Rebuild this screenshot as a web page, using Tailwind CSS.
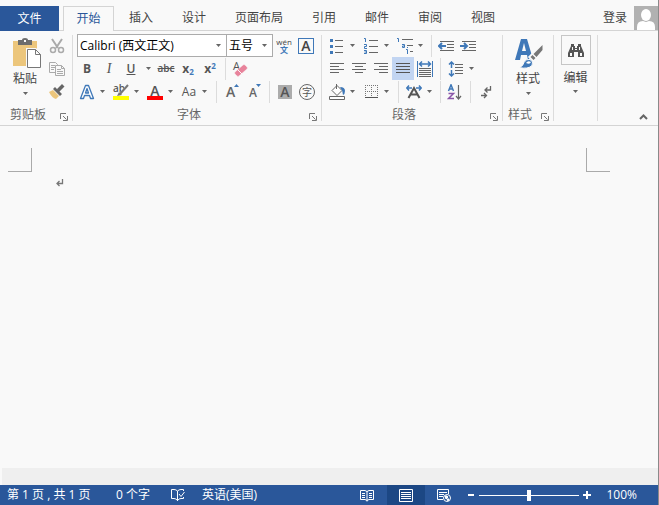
<!DOCTYPE html>
<html lang="zh-CN">

<head>
    <meta charset="UTF-8">
    <meta name="viewport" content="width=device-width, initial-scale=1.0">
    <title>文档</title>
    <script src="https://cdn.jsdelivr.net/npm/@tailwindcss/browser@4"></script>
</head>

<body class="h-screen flex flex-col overflow-hidden bg-[#f9f9f9] border-r border-[#8a8a8a] text-xs text-[#444] font-['Open_Sans','Noto_Sans_CJK_SC',sans-serif]">
    <svg class="hidden">
        <symbol id="down" viewBox="0 0 5 3"><path d="M0 0h5L2.500 3z" fill="#666" /></symbol>
        <symbol id="launch" viewBox="0 0 8 8"><path d="M.5 6V.5H6M3 3l3.500 3.500M7.500 3v4.500H3" fill="none" stroke="#777" /></symbol>
    </svg>

    <!-- Tabs -->
    <nav class="flex items-end h-[31px] shrink-0 whitespace-nowrap border-b border-[#d4d4d4]">
        <button class="w-[59px] h-[25px] -mb-px bg-[#2a579a] text-white">文件</button>
        <button class="ml-1 mr-px w-[51px] h-[25px] -mb-px bg-[#f9f9f9] border border-b-0 border-[#d4d4d4] text-[#2a579a]">开始</button>
        <div class="flex gap-px h-6">
            <button class="px-3.5">插入</button>
            <button class="px-3.5">设计</button>
            <button class="px-3.5">页面布局</button>
            <button class="px-3.5">引用</button>
            <button class="px-3.5">邮件</button>
            <button class="px-3.5">审阅</button>
            <button class="px-3.5">视图</button>
        </div>
        <a href="#" class="ml-auto mr-[7px] h-6 leading-6">登录</a>
        <svg class="w-6 h-6" viewBox="0 0 24 24"><path fill="#b1b1b1" d="M0 0h24v24H0z" /><ellipse cx="12" cy="9" rx="5" ry="6" fill="#fff" /><path fill="#fff" d="M3 24v-3q0-6 6-6l3 1 3-1q6 0 6 6v3z" /></svg>
    </nav>

    <!-- Ribbon -->
    <div class="flex shrink-0 h-[95px] border-b border-[#d4d4d4]">
        <!-- Clipboard -->
        <section class="w-[72px] pt-[3px] flex flex-col">
            <div class="flex h-[69px]">
                <button class="w-11 ml-[3px] mr-0.5 pt-1 flex flex-col items-center">
                    <svg class="w-7 h-[31px] ml-1" viewBox="0 0 28 31">
                        <path fill="#ecc67c" d="M0 3h24v25H0z" />
                        <path fill="#6d6d6d" d="M5 2h4q0-2 3-2t3 2h4v5H5z" />
                        <path fill="#f9f9f9" d="M11 2h2v2h-2z" />
                        <path fill="#fff" stroke="#f9f9f9" stroke-width="3" d="M14.500 11.500h8l5 5v13h-13z" />
                        <path fill="#fff" stroke="#777" d="M14.500 11.500h8l5 5v13h-13zM22.500 11.500v5h5" />
                    </svg>
                    <span class="leading-4 mt-0.5">粘贴</span>
                    <svg class="w-[5px] h-[3px] mt-[5px]"><use href="#down" /></svg>
                </button>
                <div class="flex flex-col">
                    <button class="w-4 h-[23px] flex items-center justify-center" aria-label="剪切">
                        <svg class="w-4 h-4" viewBox="0 0 16 16" fill="none" stroke="#aaa"><path stroke-width="2" d="M3 1l6 9M13 1L7 10" /><circle cx="4" cy="12" r="2.500" stroke-width="1.500" /><circle cx="12" cy="12" r="2.500" stroke-width="1.500" /></svg>
                    </button>
                    <button class="w-4 h-[23px] flex items-center justify-center" aria-label="复制">
                        <svg class="w-4 h-4" viewBox="0 0 16 16" fill="#f9f9f9" stroke="#aaa"><path d="M.5 1.500h6l2 2v8h-8zM2 4.500h4M2 6.500h4M2 8.500h3" /><path d="M6.500 4.500h6l3 3v7h-9zM12.500 4.500v3h3M8 8.500h4M8 10.500h6M8 12.500h6" /></svg>
                    </button>
                    <button class="w-4 h-[23px] flex items-center justify-center" aria-label="格式刷">
                        <svg class="w-4 h-4" viewBox="0 0 16 16"><path fill="#ecc67c" d="M0 8l4-2 6 6-3 3q-4-1-7-7z" /><path fill="#666" d="M4 5l2-2 7 7-2 2zM8 5l5-5 2.500 2.500-5 5z" /></svg>
                    </button>
                </div>
            </div>
            <div class="h-[18px] mt-[3px] flex items-center pl-2.5 pr-1 text-[#666]">
                <span class="flex-1">剪贴板</span>
                <button class="mt-1" aria-label="剪贴板选项"><svg class="w-2 h-2"><use href="#launch" /></svg></button>
            </div>
        </section>
        <div class="w-px my-1 bg-[#dcdcdc]"></div>

        <!-- Font -->
        <section class="w-[248px] pt-[3px] flex flex-col">
            <div class="flex h-[23px] pl-1">
                <div class="relative">
                    <select aria-label="字体" class="appearance-none w-[150px] h-[23px] pl-0.5 border border-[#ababab] bg-white text-black text-xs">
                        <option>Calibri (西文正文)</option>
                    </select>
                    <svg class="absolute right-1.5 top-2.5 w-[5px] h-[3px] pointer-events-none"><use href="#down" /></svg>
                </div>
                <div class="relative -ml-px">
                    <select aria-label="字号" class="appearance-none w-[47px] h-[23px] pl-0.5 border border-[#ababab] bg-white text-black text-xs">
                        <option>五号</option>
                    </select>
                    <svg class="absolute right-1.5 top-2.5 w-[5px] h-[3px] pointer-events-none"><use href="#down" /></svg>
                </div>
                <button class="w-[22px] flex flex-col items-center justify-center" aria-label="拼音指南">
                    <span class="h-2 text-[8px] leading-[8px]">wén</span>
                    <span class="h-2 text-[8px] leading-[8px] font-bold text-[#3f78b8]">文</span>
                </button>
                <button class="w-[22px] flex items-center justify-center" aria-label="字符边框">
                    <span class="w-4 h-4 border border-[#3f78b8] text-sm leading-[14px] font-semibold">A</span>
                </button>
            </div>
            <div class="flex h-[23px] pl-[3px] items-center text-[#555]">
                <button class="w-[22px] font-bold">B</button>
                <button class="w-[22px] italic font-['Liberation_Serif'] text-sm">I</button>
                <button class="w-[22px] underline font-semibold">U</button>
                <button class="w-3 pl-1 mr-px" aria-label="下划线样式"><svg class="w-[5px] h-[3px]"><use href="#down" /></svg></button>
                <button class="w-[22px] line-through text-[10px] font-semibold">abc</button>
                <button class="w-[22px] font-bold flex justify-center items-end">x<span class="text-[8px] leading-[10px] text-[#3f78b8]">2</span></button>
                <button class="w-[22px] font-bold flex justify-center items-start">x<span class="text-[8px] leading-[10px] text-[#3f78b8]">2</span></button>
                <div class="w-px h-[22px] mx-1 bg-[#dcdcdc]"></div>
                <button class="w-[22px] flex justify-center" aria-label="清除所有格式">
                    <svg class="w-4 h-4 overflow-visible" viewBox="0 0 16 16"><text x="0" y="9" font-size="11" fill="#555">A</text><path fill="#e8839b" stroke="#f9f9f9" stroke-width=".5" d="M2 11l8-7q1-1 2 0l2 2q1 1 0 2l-8 7q-1 1-2 0l-2-2q-1-1 0-2z" /><path stroke="#f9f9f9" d="M4.500 8.500l4.500 4.500" /></svg>
                </button>
            </div>
            <div class="flex h-[23px] pl-[3px] items-center text-[#555]">
                <button class="w-[22px] flex justify-center" aria-label="文本效果"><svg class="w-4 h-4" viewBox="0 0 16 16"><path d="M1.500 14.500L6.500 1.500h3l5 13h-3l-1-3h-5l-1 3zM6.500 9h3L8 4.500z" fill="#fff" stroke="#3f78b8" stroke-width="1.300" stroke-linejoin="round" /></svg></button>
                <button class="w-3 pl-0.5" aria-label="文本效果选项"><svg class="w-[5px] h-[3px]"><use href="#down" /></svg></button>
                <button class="w-[22px] flex justify-center" aria-label="突出显示"><svg class="w-4 h-4 overflow-visible" viewBox="0 0 16 16"><text x="0" y="8" font-size="10" font-weight="600" fill="#555">ab</text><path stroke="#f9f9f9" stroke-width="3" d="M7 11l8-9" /><path stroke="#777" stroke-width="2" d="M7 10l8-9" /><path fill="#777" d="M4 12l2-4 3 3z" /><path fill="#ff0" d="M0 12h16v4H0z" /></svg></button>
                <button class="w-3 pl-0.5" aria-label="突出显示颜色"><svg class="w-[5px] h-[3px]"><use href="#down" /></svg></button>
                <button class="w-[22px] flex justify-center" aria-label="字体颜色"><svg class="w-4 h-4 overflow-visible" viewBox="0 0 16 16"><text x="8" y="12" text-anchor="middle" font-size="14" font-weight="600" fill="#555">A</text><path fill="red" d="M0 12h16v4H0z" /></svg></button>
                <button class="w-3 pl-0.5" aria-label="更多字体颜色"><svg class="w-[5px] h-[3px]"><use href="#down" /></svg></button>
                <button class="w-[22px]">Aa</button>
                <button class="w-3 pl-0.5" aria-label="更改大小写"><svg class="w-[5px] h-[3px]"><use href="#down" /></svg></button>
                <div class="w-px h-[22px] mx-1 bg-[#dcdcdc]"></div>
                <button class="w-[22px] flex justify-center" aria-label="增大字号"><svg class="w-4 h-4 overflow-visible" viewBox="0 0 16 16"><text x="2" y="13" font-size="14" font-weight="600" fill="#666">A</text><path fill="#3f78b8" d="M10 3l2.500-3L15 3z" /></svg></button>
                <button class="w-[22px] flex justify-center" aria-label="减小字号"><svg class="w-4 h-4 overflow-visible" viewBox="0 0 16 16"><text x="3" y="13" font-size="12" font-weight="600" fill="#666">A</text><path fill="#3f78b8" d="M10 0h5l-2.500 3z" /></svg></button>
                <div class="w-px h-[22px] mx-1 bg-[#dcdcdc]"></div>
                <button class="w-[22px] flex justify-center" aria-label="字符底纹"><span class="w-3.5 h-3.5 bg-[#acacac] text-sm leading-[14px] font-semibold">A</span></button>
                <button class="w-[22px] flex justify-center" aria-label="带圈字符"><span class="w-4 h-4 border border-[#666] rounded-full text-[10px] leading-[14px]">字</span></button>
            </div>
            <div class="h-[18px] mt-[3px] flex items-center pr-1 text-[#666]">
                <span class="flex-1 text-center pr-1">字体</span>
                <button class="mt-1" aria-label="字体选项"><svg class="w-2 h-2"><use href="#launch" /></svg></button>
            </div>
        </section>
        <div class="w-px my-1 bg-[#dcdcdc]"></div>

        <!-- Paragraph -->
        <section class="w-[180px] pt-[3px] flex flex-col">
            <div class="flex h-[23px] pl-1 items-center">
                <button class="w-[22px] flex justify-center" aria-label="项目符号"><svg class="w-4 h-4" viewBox="0 0 16 16"><path stroke="#666" d="M6 2.500h8M6 8.500h8M6 14.500h8" /><path fill="#3f78b8" d="M1 1h3v3H1zM1 7h3v3H1zM1 13h3v3H1z" /></svg></button>
                <button class="w-3 pl-0.5" aria-label="项目符号库"><svg class="w-[5px] h-[3px]"><use href="#down" /></svg></button>
                <button class="w-[22px] flex justify-center" aria-label="编号"><svg class="w-4 h-4" viewBox="0 0 16 16" fill="none"><path stroke="#666" d="M6 2.500h9M6 8.500h9M6 14.500h9" /><path stroke="#3f78b8" d="M1 .5h1.500V4M1 6.500h2.500v2h-2v2H4M1 12.500h2.500v3H1M1.500 14h2" /></svg></button>
                <button class="w-3 pl-0.5" aria-label="编号库"><svg class="w-[5px] h-[3px]"><use href="#down" /></svg></button>
                <button class="w-[22px] flex justify-center" aria-label="多级列表"><svg class="w-4 h-4" viewBox="0 0 16 16" fill="none"><path stroke="#666" d="M5 1.500h11M10 7.500h6M13 13.500h3" /><path stroke="#3f78b8" d="M0 .5h1.500V4M5 6.500h2.500v3h-2v-1.500h2M9 11.500h1.500V16M10 9.500h1" /></svg></button>
                <button class="w-3 pl-0.5" aria-label="多级列表库"><svg class="w-[5px] h-[3px]"><use href="#down" /></svg></button>
                <div class="w-px h-[22px] mx-[3px] bg-[#dcdcdc]"></div>
                <button class="w-[22px] flex justify-center" aria-label="减少缩进量"><svg class="w-4 h-3" viewBox="0 0 16 12" fill="none"><path stroke="#666" d="M2 1.500h14M9 4.500h7M9 7.500h7M2 10.500h14" /><path stroke="#3f78b8" stroke-width="2" d="M8 6H1M4 3L1 6l3 3" /></svg></button>
                <button class="w-[22px] flex justify-center" aria-label="增加缩进量"><svg class="w-4 h-3" viewBox="0 0 16 12" fill="none"><path stroke="#666" d="M2 1.500h14M9 4.500h7M9 7.500h7M2 10.500h14" /><path stroke="#3f78b8" stroke-width="2" d="M0 6h7M4 3l3 3-3 3" /></svg></button>
            </div>
            <div class="flex h-[23px] pl-1 items-center">
                <button class="w-[22px] flex justify-center" aria-label="左对齐"><svg class="w-3.5 h-[11px]" viewBox="0 0 14 11" stroke="#666"><path d="M0 .5h14M0 3.500h9M0 6.500h14M0 9.500h9" /></svg></button>
                <button class="w-[22px] flex justify-center" aria-label="居中"><svg class="w-3.5 h-[11px]" viewBox="0 0 14 11" stroke="#666"><path d="M0 .5h14M3 3.500h8M0 6.500h14M3 9.500h8" /></svg></button>
                <button class="w-[22px] flex justify-center" aria-label="右对齐"><svg class="w-3.5 h-[11px]" viewBox="0 0 14 11" stroke="#666"><path d="M0 .5h14M5 3.500h9M0 6.500h14M5 9.500h9" /></svg></button>
                <button class="w-[22px] h-[23px] flex items-center justify-center bg-[#c2d5f2]" aria-label="两端对齐"><svg class="w-3.5 h-[11px]" viewBox="0 0 14 11" stroke="#555"><path d="M0 .5h14M0 3.500h14M0 6.500h14M0 9.500h14" /></svg></button>
                <button class="w-[22px] flex justify-center" aria-label="分散对齐"><svg class="w-4 h-4" viewBox="0 0 16 16" fill="none"><path stroke="#3f78b8" d="M.5 0v16M15.500 0v16" /><path stroke="#3f78b8" stroke-width="1.500" d="M3 3h10M5 .5L2.500 3 5 5.500M11 .5L13.500 3 11 5.500" /><path stroke="#666" d="M2 7.500h12M2 9.500h12M2 11.500h12M2 13.500h12M2 15.500h12" /></svg></button>
                <div class="w-px h-[22px] mx-1 bg-[#dcdcdc]"></div>
                <button class="w-[22px] flex justify-center" aria-label="行距"><svg class="w-4 h-4" viewBox="0 0 16 16" fill="none"><path stroke="#666" d="M7 3.500h8M7 6.500h8M7 9.500h8M7 12.500h8" /><path stroke="#3f78b8" stroke-width="1.500" d="M3.500 1v6M1 3.500L3.500 1 6 3.500M3.500 9v6M1 12.500L3.500 15 6 12.500" /></svg></button>
                <button class="w-3 pl-0.5" aria-label="行距选项"><svg class="w-[5px] h-[3px]"><use href="#down" /></svg></button>
            </div>
            <div class="flex h-[23px] pl-1 items-center">
                <button class="w-[22px] flex justify-center" aria-label="底纹"><svg class="w-4 h-4" viewBox="0 0 16 16" fill="none"><path stroke="#666" fill="#fff" d="M8 1.500l5 5-5 5-5-5zM7.500 0v5M.5 12.500h15v3H.5z" /><path fill="#3f78b8" d="M11 3q5 0 5 4 0 3-2 4 0-4-3-8z" /></svg></button>
                <button class="w-3 pl-0.5" aria-label="底纹颜色"><svg class="w-[5px] h-[3px]"><use href="#down" /></svg></button>
                <button class="w-[22px] flex justify-center" aria-label="边框"><svg class="w-[13px] h-[13px]" viewBox="0 0 13 13" stroke="#777"><path stroke-dasharray="1 1" d="M0 .5h13M0 6.500h13M.5 0v13M6.500 0v13M12.500 0v13" /><path d="M0 12.500h13" stroke="#555" /></svg></button>
                <button class="w-3 pl-0.5" aria-label="边框样式"><svg class="w-[5px] h-[3px]"><use href="#down" /></svg></button>
                <div class="w-px h-[22px] mx-1 bg-[#dcdcdc]"></div>
                <button class="w-[22px] flex justify-center" aria-label="中文版式"><svg class="w-4 h-4" viewBox="0 0 16 16" fill="none"><path stroke="#555" stroke-width="2" d="M2.500 14L8 4l5.500 10M5 10.500h6" /><path stroke="#3f78b8" stroke-width="1.500" d="M6 4H1M3 1.500L.8 4 3 6.500M10 4h5M13 1.500L15.200 4 13 6.500" /></svg></button>
                <button class="w-3 pl-0.5" aria-label="中文版式选项"><svg class="w-[5px] h-[3px]"><use href="#down" /></svg></button>
                <div class="w-px h-[22px] mx-[3px] bg-[#dcdcdc]"></div>
                <button class="w-[22px] flex justify-center" aria-label="排序"><svg class="w-4 h-4" viewBox="0 0 16 16" fill="none"><path stroke="#3f78b8" stroke-width="1.500" d="M1.500 7L4 .8 6.500 7M2.500 5h3" /><path stroke="#8a55a8" stroke-width="1.500" d="M1.500 9.500h5l-5 5H7" /><path stroke="#666" stroke-width="1.200" d="M11.500 1v14M9 12l2.500 3 2.500-3" /></svg></button>
                <div class="w-px h-[22px] mx-1 bg-[#dcdcdc]"></div>
                <button class="w-[22px] flex justify-center" aria-label="显示编辑标记"><svg class="w-3 h-3.5" viewBox="0 0 12 14" fill="none" stroke="#666" stroke-width="1.300"><path d="M10.500 1v4H5M7.500 2.500L5 5l2.500 2.500M1 10.500h5M4 8l2.500 2.500L4 13" /></svg></button>
            </div>
            <div class="h-[18px] mt-[3px] flex items-center pr-1 text-[#666]">
                <span class="flex-1 text-center pr-1">段落</span>
                <button class="mt-1" aria-label="段落选项"><svg class="w-2 h-2"><use href="#launch" /></svg></button>
            </div>
        </section>
        <div class="w-px my-1 bg-[#dcdcdc]"></div>

        <!-- Styles -->
        <section class="w-[50px] pt-[3px] flex flex-col">
            <button class="h-[69px] pt-1 flex flex-col items-center">
                <svg class="w-7 h-[31px] ml-0.5" viewBox="0 0 28 31">
                    <path fill="#3f78b8" fill-rule="evenodd" d="M0 22L6 1h6l5 17-4 4-1-5H6l-1 5zM7 13h4L9 5z" />
                    <path stroke="#f9f9f9" stroke-width="6" d="M15 21L27 9" />
                    <path fill="#777" d="M27.500 7v5l-6 7-3-3zM17.500 17l3 3-2 2-3-3z" />
                    <path fill="#3f78b8" stroke="#f9f9f9" d="M4 29.500q4-1 5-5 2-4 6-3 4 2 2 6-4 4-13 2z" />
                    <path fill="#fff" d="M11 25q2-3 5-1-1 3-5 1z" />
                </svg>
                <span class="leading-4 mt-0.5">样式</span>
                <svg class="w-[5px] h-[3px] mt-[5px]"><use href="#down" /></svg>
            </button>
            <div class="h-[18px] mt-[3px] flex items-center pl-[5px] pr-1 text-[#666]">
                <span class="flex-1">样式</span>
                <button class="mt-1" aria-label="样式选项"><svg class="w-2 h-2"><use href="#launch" /></svg></button>
            </div>
        </section>
        <div class="w-px my-1 bg-[#dcdcdc]"></div>

        <!-- Editing -->
        <section class="w-[43px] pt-1">
            <button class="w-full flex flex-col items-center">
                <span class="w-[30px] h-[30px] border border-[#c6c6c6] flex items-center justify-center">
                    <svg class="w-4 h-3.5" viewBox="0 0 16 14"><path fill="#555" d="M3 1h3v2h1v2h2V3h1V1h3v2l3 7v4h-6V9H6v5H0v-4l3-7z" /><path fill="#f9f9f9" d="M2 10h2v3H2zM12 10h2v3h-2zM4 4h1v3H4zM11 4h1v3h-1zM7 6h2v1H7z" /></svg>
                </span>
                <span class="leading-4 mt-[5px]">编辑</span>
                <svg class="w-[5px] h-[3px] mt-1"><use href="#down" /></svg>
            </button>
        </section>
        <div class="w-px my-1 bg-[#dcdcdc]"></div>
        <button class="ml-auto mr-2.5 self-end mb-1" aria-label="折叠功能区">
            <svg class="w-[9px] h-2" viewBox="0 0 9 8"><path d="M1 6l3.500-3.500L8 6" fill="none" stroke="#666" stroke-width="2" /></svg>
        </button>
    </div>

    <!-- Page -->
    <main class="flex-1 min-h-0 pt-[22px]">
        <div class="flex justify-between pl-2 pr-12">
            <div class="w-6 h-6 border-r border-b border-[#aaa]"></div>
            <div class="w-6 h-6 border-l border-b border-[#aaa]"></div>
        </div>
        <p class="pl-14 pt-1.5">
            <svg class="w-2 h-[9px]" viewBox="0 0 8 9" fill="none" stroke="#777"><path stroke-width="1.300" d="M6.500 1v4.500H1M3.500 3L1 5.500 3.500 8" /></svg>
        </p>
    </main>
    <div class="h-[17px] shrink-0 ml-0.5 bg-[#efefef]"></div>

    <!-- Status bar -->
    <footer class="flex shrink-0 items-center h-5 pl-[7px] pr-[21px] bg-[#2a579a] text-white whitespace-nowrap">
        <span class="w-[109px]">第 1 页 , 共 1 页</span>
        <span class="w-[55px]">0 个字</span>
        <button class="w-[31px]" aria-label="校对"><svg class="w-3.5 h-3.5" viewBox="0 0 14 14" fill="none" stroke="#fff"><path d="M6.500 13V3Q5 1.500 3 1.500H.5v9H3q2 0 3.500 2 1.500-2 3.500-2h2.500V9M6.500 3Q8 1.500 10 1.500h2.500V3M8 6l2 2.500L13.500 4" /></svg></button>
        <span>英语(美国)</span>
        <div class="ml-auto flex items-center">
            <button class="w-[41px] h-5 flex items-center justify-center" aria-label="阅读视图"><svg class="w-3.5 h-[13px]" viewBox="0 0 14 13" fill="none" stroke="#fff"><path d="M7 12.500V2M.5 1.500H5l2 1 2-1h4.500v9H9l-2 1-2-1H.5zM2 4.500h3M2 6.500h3M2 8.500h3M9 4.500h3M9 6.500h3M9 8.500h3" /></svg></button>
            <button class="w-[38px] h-5 flex items-center justify-center bg-[#1c4784]" aria-label="页面视图"><svg class="w-3.5 h-[13px]" viewBox="0 0 14 13" fill="none" stroke="#fff"><path d="M.5.5h13v12H.5zM2 3.500h10M2 5.500h10M2 7.500h10M2 9.500h10" /></svg></button>
            <button class="w-[38px] h-5 flex items-center justify-center" aria-label="Web 版式"><svg class="w-3.5 h-[13px]" viewBox="0 0 14 13" fill="none" stroke="#fff"><path d="M6 10.500H.5V.5h11V5M2 3.500h8M2 5.500h5M2 7.500h4" /><circle cx="10" cy="9" r="3.500" fill="#2a579a" /><path fill="#fff" d="M8 7h2l1 1-2 2zM10 10h2l-1 2z" /></svg></button>
            <button class="w-4 h-5 flex items-center justify-center" aria-label="缩小"><span class="w-1.5 h-0.5 bg-white"></span></button>
            <input type="range" min="0" max="100" value="50" aria-label="显示比例" class="appearance-none w-[100px] h-3 bg-transparent [&::-webkit-slider-runnable-track]:h-px [&::-webkit-slider-runnable-track]:bg-white [&::-webkit-slider-thumb]:appearance-none [&::-webkit-slider-thumb]:w-1 [&::-webkit-slider-thumb]:h-[11px] [&::-webkit-slider-thumb]:-mt-[5px] [&::-webkit-slider-thumb]:bg-white">
            <button class="w-4 h-5 flex items-center justify-center" aria-label="放大"><svg class="w-2 h-2" viewBox="0 0 8 8"><path fill="#fff" d="M3 0h2v3h3v2H5v3H3V5H0V3h3z" /></svg></button>
            <span class="ml-[11px]">100%</span>
        </div>
    </footer>
</body>

</html>
